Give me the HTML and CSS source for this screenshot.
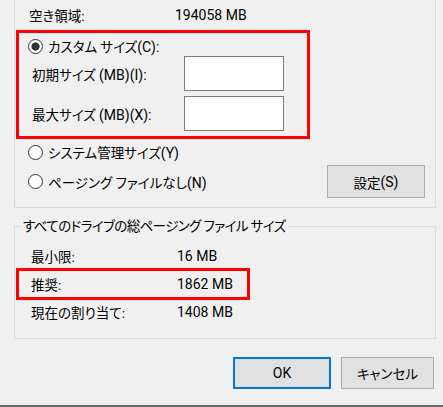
FILE: index.html
```html
<!DOCTYPE html>
<html lang="ja">
<head>
<meta charset="utf-8">
<link rel="stylesheet" href="styles.css">
</head>
<body>
<div class="page">
  <div class="group1">
    <div class="row free">
      <span class="lbl">空き領域:</span><span class="val">194058 MB</span>
    </div>
    <div class="red1">
      <div class="radio-row custom">
        <span class="radio on"></span><span>カスタム サイズ<span class="en">(C):</span></span>
      </div>
      <div class="input-row">
        <span class="ilbl">初期サイズ <span class="en">(MB)(I):</span></span><span class="input"></span>
      </div>
      <div class="input-row second">
        <span class="ilbl">最大サイズ <span class="en">(MB)(X):</span></span><span class="input"></span>
      </div>
    </div>
    <div class="radio-row sys">
      <span class="radio"></span><span>システム管理サイズ<span class="en">(Y)</span></span>
    </div>
    <div class="radio-row nopage">
      <span class="radio"></span><span class="grow">ページング ファイルなし<span class="en">(N)</span></span>
      <span class="btn set">設定<span class="en">(S)</span></span>
    </div>
  </div>

  <fieldset class="group2">
    <legend>すべてのドライブの総ページング ファイル サイズ</legend>
    <div class="row stat first">
      <span class="lbl2">最小限:</span><span class="val">16 MB</span>
    </div>
    <div class="red2">
      <span class="lbl3">推奨:</span><span class="val">1862 MB</span>
    </div>
    <div class="row stat">
      <span class="lbl2">現在の割り当て:</span><span class="val">1408 MB</span>
    </div>
  </fieldset>

  <div class="buttons">
    <span class="btn ok"><span class="en">OK</span></span>
    <span class="btn cancel">キャンセル</span>
  </div>
  <div class="bottom-line"></div>
</div>
</body>
</html>
```
FILE: styles.css
```css
html, body {
  margin: 0;
  padding: 0;
  background: #f0f0f0;
}
body {
  width: 443px;
  height: 407px;
  overflow: hidden;
  font-family: Roboto, "Noto Sans CJK JP", sans-serif;
  font-size: 13.5px;
  font-feature-settings: "palt";
  color: #000;
}
.en,
.val {
  font-family: Roboto, "Noto Sans", sans-serif;
  font-size: 14px;
}
.page {
  width: 443px;
  height: 407px;
  display: flex;
  flex-direction: column;
}
.group1 {
  margin-left: 14px;
  width: 422px;
  box-sizing: border-box;
  border: 1px solid #dcdcdc;
  border-top: none;
  padding-bottom: 9px;
}
.row {
  display: flex;
  align-items: center;
}
.free {
  height: 30px;
  padding-left: 14px;
}
.lbl {
  width: 146px;
  flex: none;
}
.val {
  white-space: nowrap;
}
.red1 {
  margin-left: 1px;
  width: 294px;
  height: 109px;
  box-sizing: border-box;
  border: 3px solid #ff0000;
}
.radio-row {
  display: flex;
  align-items: center;
}
.radio {
  width: 15px;
  height: 15px;
  box-sizing: border-box;
  border: 1px solid #333333;
  border-radius: 50%;
  background: #ffffff;
  margin-right: 5px;
  flex: none;
}
.radio.on {
  background: radial-gradient(circle, #333333 0, #333333 3.8px, #ffffff 4.4px);
}
.custom {
  height: 23px;
  padding-top: 3px;
  box-sizing: border-box;
  padding-left: 9px;
}
.input-row {
  display: flex;
  align-items: center;
  height: 35px;
  padding-left: 13px;
}
.input-row.second {
  margin-top: 5px;
}
.ilbl {
  width: 152px;
  flex: none;
}
.input {
  width: 100px;
  height: 35px;
  box-sizing: border-box;
  background: #ffffff;
  border: 1px solid #7a7a7a;
}
.sys {
  height: 26px;
  padding-left: 13px;
}
.nopage {
  height: 33px;
  padding-left: 13px;
  padding-right: 10px;
}
.grow {
  flex: 1;
}
.btn {
  display: flex;
  align-items: center;
  justify-content: center;
  box-sizing: border-box;
  background: #e1e1e1;
  border: 1px solid #adadad;
}
.set {
  width: 98px;
  height: 33px;
}
.group2 {
  margin: 9px 0 0 14px;
  width: 422px;
  box-sizing: border-box;
  border: 1px solid #dcdcdc;
  padding: 0 0 14px 0;
  min-width: 0;
}
.group2 legend {
  margin-left: 6px;
  padding: 0 2px;
  line-height: 18px;
  letter-spacing: -0.6px;
}
.stat {
  height: 24px;
  padding-left: 16px;
}
.stat.first {
  margin-top: 9px;
}
.lbl2 {
  width: 146px;
  flex: none;
}
.red2 {
  margin-left: 1px;
  width: 234px;
  height: 32px;
  box-sizing: border-box;
  border: 3px solid #ff0000;
  display: flex;
  align-items: center;
  padding-left: 12px;
}
.lbl3 {
  width: 146px;
  flex: none;
}
.buttons {
  display: flex;
  justify-content: flex-end;
  gap: 10px;
  padding-right: 9px;
  margin-top: 18px;
}
.ok {
  width: 98px;
  height: 32px;
  border: 2px solid #0078d7;
}
.cancel {
  width: 93px;
  height: 32px;
}
.bottom-line {
  margin-top: auto;
  height: 2px;
  background: #6a6a6a;
}
```
